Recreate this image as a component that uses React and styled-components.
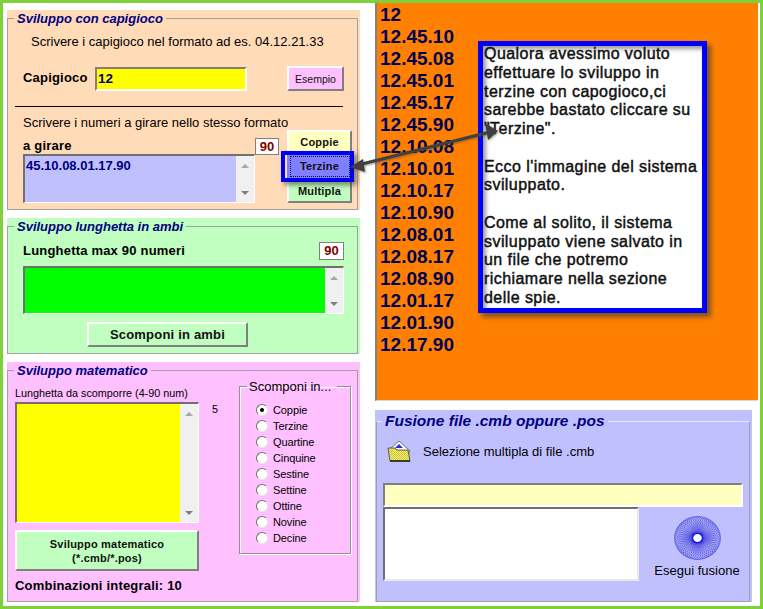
import React from "react";
import styled, { createGlobalStyle } from "styled-components";

const GlobalStyle = createGlobalStyle`
  html, body {
    margin: 0;
    padding: 0;
    background: #fff;
  }
  * { box-sizing: border-box; }
`;

const Page = styled.div`
  position: relative;
  width: 763px;
  height: 609px;
  border: 3px solid #7fd13b;
  background: #fff;
  display: flex;
  font-family: "Liberation Sans", Arial, sans-serif;
  color: #000;
  overflow: hidden;
`;

const LeftColumn = styled.div`
  width: 353px;
  margin: 7px 0 0 4px;
  display: flex;
  flex-direction: column;
  gap: 8px;
`;

const RightColumn = styled.div`
  width: 383px;
  margin-left: 15px;
  display: flex;
  flex-direction: column;
`;

const Panel = styled.div`
  height: ${(p) => p.$height}px;
  width: ${(p) => p.$width || 353}px;
  margin-top: ${(p) => p.$top || 0}px;
  background: ${(p) => p.$bg};
  padding: 1px 2px 0 ${(p) => p.$inset || 0}px;
`;

const Frame = styled.fieldset`
  margin: 0;
  min-width: 0;
  height: 100%;
  padding: 0;
  border: 1px solid #a0a0a0;
  border-top-color: ${(p) => (p.$lightTop ? "#e8e8f8" : "#a0a0a0")};
`;

const Title = styled.legend`
  margin-left: ${(p) => (p.$size ? 5 : 6)}px;
  padding: 0 3px;
  font-size: ${(p) => p.$size || 13}px;
  line-height: ${(p) => (p.$size ? 20 : 15)}px;
  font-weight: bold;
  font-style: italic;
  color: #000080;
`;

const Hint = styled.div`
  font-size: 13px;
  line-height: 16px;
  margin: ${(p) => p.$top || 0}px 0 0 ${(p) => p.$left || 0}px;
  white-space: nowrap;
`;

const BoldLabel = styled.div`
  font-size: 13px;
  line-height: 16px;
  font-weight: bold;
  letter-spacing: 0.2px;
  white-space: nowrap;
`;

const Body = styled.div`
  padding-left: 15px;
`;

const EntryRow = styled.div`
  display: flex;
  align-items: center;
  margin-top: 16px;
  height: 25px;
`;

const EntryLabel = styled(BoldLabel)`
  width: 72px;
  margin-top: -2px;
`;

const YellowEntry = styled.div`
  width: 152px;
  height: 24px;
  margin-right: 40px;
  background: #ffff00;
  border: 2px solid;
  border-color: #808080 #fff #fff #808080;
  padding: 2px 1px;
  font-size: 13.5px;
  line-height: 16px;
  font-weight: bold;
  color: #000080;
`;

const RaisedButton = styled.div`
  position: relative;
  display: flex;
  align-items: center;
  justify-content: center;
  text-align: center;
  width: ${(p) => p.$w}px;
  height: ${(p) => p.$h}px;
  margin: ${(p) => p.$margin || 0};
  background: ${(p) => p.$bg};
  border: 2px solid;
  border-color: #fff #808080 #808080 #fff;
  font-size: ${(p) => p.$size || 11}px;
  line-height: 14px;
  font-weight: ${(p) => (p.$bold ? "bold" : "normal")};
  letter-spacing: ${(p) => (p.$bold ? "0.2px" : "0")};
  color: #101010;
`;

const HighlightButton = styled(RaisedButton)`
  z-index: 2;
  background: #8080ff;
  border: none;
  padding-bottom: 2px;
  &::before {
    content: "";
    position: absolute;
    inset: 2px 2px 2px 3px;
    border: 1px dotted #101030;
  }
  &::after {
    content: "";
    position: absolute;
    inset: -3px -2px -3px -6px;
    border: 4px solid #0000f0;
    box-shadow: 3px 3px 5px rgba(60, 50, 40, 0.6);
  }
`;

const Rule = styled.div`
  width: 328px;
  height: 1px;
  margin: 15px 0 0 -8px;
  background: #000;
`;

const Lower = styled.div`
  display: flex;
  margin-top: 8px;
`;

const LowerText = styled.div`
  width: 264px;
`;

const GirareRow = styled.div`
  width: 256px;
  height: 23px;
  display: flex;
  align-items: flex-end;
  justify-content: space-between;
`;

const Counter = styled.div`
  position: relative;
  z-index: 1;
  width: ${(p) => p.$w}px;
  height: ${(p) => p.$h}px;
  background: #fff;
  border: 1px solid #808080;
  font-size: 13px;
  line-height: ${(p) => p.$h - 2}px;
  font-weight: bold;
  text-align: center;
  color: #800000;
  margin-bottom: ${(p) => p.$drop || 0}px;
`;

const ButtonStack = styled.div`
  margin-top: 15px;
  display: flex;
  flex-direction: column;
`;

const ScrollBox = styled.div`
  display: flex;
  width: ${(p) => p.$w}px;
  height: ${(p) => p.$h}px;
  margin-top: ${(p) => p.$top || 0}px;
  background: ${(p) => p.$bg};
  border: 2px solid;
  border-color: #707070 #fff #fff #707070;
  border-right-width: 1px;
  border-bottom-width: 1px;
`;

const ScrollText = styled.div`
  flex: 1;
  padding: 2px 1px;
  font-size: 13px;
  line-height: 16px;
  font-weight: bold;
  color: #000080;
`;

const Scrollbar = styled.div`
  width: 18px;
  background: #f0f0f0;
  display: flex;
  flex-direction: column;
  justify-content: space-between;
  align-items: center;
  padding: 8px 0 7px;
`;

const ScrollArrow = styled.span`
  width: 0;
  height: 0;
  border-left: 4px solid transparent;
  border-right: 4px solid transparent;
  border-bottom: ${(p) => (p.$down ? "0" : "4px solid #a8a8a8")};
  border-top: ${(p) => (p.$down ? "4px solid #808080" : "0")};
`;

const SpaceRow = styled.div`
  width: 321px;
  margin-top: 8px;
  height: 18px;
  display: flex;
  align-items: center;
  justify-content: space-between;
`;

const MathRow = styled.div`
  display: flex;
  padding-left: 7px;
`;

const MathLeft = styled.div`
  width: 184px;
  margin-top: 8px;
`;

const SmallLabel = styled.div`
  font-size: 10.8px;
  line-height: 14px;
  white-space: nowrap;
`;

const FiveValue = styled(SmallLabel)`
  width: 40px;
  margin-top: 24px;
  padding-left: 13px;
`;

const TotalLabel = styled(BoldLabel)`
  margin-top: 7px;
`;

const GroupFrame = styled.fieldset`
  width: 112px;
  height: 175px;
  margin: 1px 0 0;
  padding: 8px 0 0 16px;
  min-width: 0;
  border: 1px solid #909090;
  box-shadow: 1px 1px 0 #fff, inset 1px 1px 0 #fff;
`;

const GroupTitle = styled.legend`
  margin-left: -9px;
  padding: 0 6px 0 2px;
  font-size: 13px;
  line-height: 15px;
  white-space: nowrap;
`;

const RadioRow = styled.div`
  display: flex;
  align-items: center;
  height: 16px;
  gap: 5px;
  font-size: 11px;
  letter-spacing: -0.1px;
`;

const RadioDot = styled.span`
  position: relative;
  width: 12px;
  height: 12px;
  border-radius: 50%;
  background: #fff;
  border: 1px solid;
  border-color: #707070 #e8e8e8 #e8e8e8 #707070;
  &::after {
    content: "";
    display: ${(p) => (p.$checked ? "block" : "none")};
    position: absolute;
    left: 3px;
    top: 3px;
    width: 4px;
    height: 4px;
    border-radius: 50%;
    background: #000;
  }
`;

const Output = styled.div`
  position: relative;
  height: 398px;
  width: 383px;
  background: #ff8000;
  border-left: 2px solid #808080;
  border-bottom: 1px solid #d8d8d8;
  padding: 1px 0 0 3px;
`;

const SystemLine = styled.div`
  font-size: 19px;
  line-height: 22px;
  font-weight: bold;
  color: #000050;
`;

const Callout = styled.div`
  position: absolute;
  left: 101px;
  top: 38px;
  width: 229px;
  height: 272px;
  background: #fff;
  border: 5px solid #0000ff;
  padding-left: 1px;
  font-size: 16px;
  line-height: 18.77px;
  letter-spacing: 0.44px;
  -webkit-text-stroke: 0.45px #101010;
  color: #101010;
  white-space: nowrap;
  box-shadow: 4px 4px 5px rgba(70, 60, 40, 0.7), inset 3px 3px 4px rgba(0, 0, 0, 0.4);
`;

const CalloutText = styled.p`
  margin: 0 0 18.77px;
  &:first-child {
    margin-top: -1px;
  }
`;

const FusionBody = styled.div`
  padding-left: 6px;
`;

const FileRow = styled.div`
  display: flex;
  align-items: center;
  height: 21px;
  margin: 10px 0 0 4px;
  gap: 12px;
  font-size: 13px;
`;

const PathEntry = styled.div`
  width: 360px;
  height: 24px;
  margin-top: 21px;
  background: #ffffc0;
  border: 2px solid;
  border-color: #808080 #fff #fff #808080;
`;

const FusionRow = styled.div`
  display: flex;
`;

const FileList = styled.div`
  width: 256px;
  height: 74px;
  background: #fff;
  border: 2px solid;
  border-color: #707070 #e8e8e8 #e8e8e8 #707070;
`;

const MergeAction = styled.div`
  width: 104px;
  padding: 9px 0 0 12px;
  display: flex;
  flex-direction: column;
  align-items: center;
  font-size: 13px;
  line-height: 16px;
  white-space: nowrap;
`;

const MergeLabel = styled.div`
  margin-top: 3px;
`;

const ArrowLayer = styled.svg`
  position: absolute;
  left: -3px;
  top: -3px;
  z-index: 5;
  pointer-events: none;
  filter: drop-shadow(1px 1px 1px rgba(60, 60, 60, 0.5));
`;

// hypotrochoid, the loops don't close for 10 turns so the moire looks speckled
const spiralPath = () => {
  const points = [];
  for (let i = 0; i <= 2400; i++) {
    const t = (i / 2400) * Math.PI * 20;
    const x = 14 * Math.cos(t) + 9.5 * Math.cos(4.3 * t);
    const y = 14 * Math.sin(t) - 9.5 * Math.sin(4.3 * t);
    points.push(`${x.toFixed(2)} ${y.toFixed(2)}`);
  }
  return "M" + points.join("L");
};

const Spiral = () => (
  <svg width="47" height="44" viewBox="-24 -24 48 48" preserveAspectRatio="none">
    <path d={spiralPath()} fill="none" stroke="#1c1cd0" strokeWidth="0.4" />
    <circle r="5" fill="#fff" stroke="#1010e0" strokeWidth="1.2" />
  </svg>
);

const FolderIcon = () => (
  <svg width="24" height="21" viewBox="0 0 24 21">
    <defs>
      <pattern id="dither" width="2" height="2" patternUnits="userSpaceOnUse">
        <rect width="2" height="2" fill="#f8f270" />
        <rect width="1" height="1" fill="#c8c040" />
        <rect x="1" y="1" width="1" height="1" fill="#c8c040" />
      </pattern>
    </defs>
    <path d="M3 8 L12 0 L23 10 L21 14 L4 13 Z" fill="#fff" stroke="#505050" strokeWidth="0.8" />
    <path d="M8 7 L12 3 L16 7 Z" fill="#2030e0" />
    <path d="M1 7 L8 7 L10 9 L21 9 L23 20 L3 20 Z" fill="url(#dither)" stroke="#404020" strokeWidth="0.8" />
    <path d="M3 20 L23 20" stroke="#202010" strokeWidth="1.5" />
  </svg>
);

const SYSTEMS = [
  "12", "12.45.10", "12.45.08", "12.45.01", "12.45.17", "12.45.90", "12.10.08",
  "12.10.01", "12.10.17", "12.10.90", "12.08.01", "12.08.17", "12.08.90",
  "12.01.17", "12.01.90", "12.17.90",
];

const SPLITS = ["Coppie", "Terzine", "Quartine", "Cinquine", "Sestine", "Settine", "Ottine", "Novine", "Decine"];

const ScrollArrows = () => (
  <Scrollbar>
    <ScrollArrow />
    <ScrollArrow $down />
  </Scrollbar>
);

export default function App() {
  return (
    <>
      <GlobalStyle />
      <Page>
        <LeftColumn>
          <Panel $height={200} $bg="#ffdbb8">
            <Frame>
              <Title>Sviluppo con capigioco</Title>
              <Body>
                <Hint $top={8} $left={8}>Scrivere i capigioco nel formato ad es. 04.12.21.33</Hint>
                <EntryRow>
                  <EntryLabel>Capigioco</EntryLabel>
                  <YellowEntry>12</YellowEntry>
                  <RaisedButton $w={57} $h={25} $bg="#ffc0ff" $size={10.5}>Esempio</RaisedButton>
                </EntryRow>
                <Rule />
                <Lower>
                  <LowerText>
                    <Hint>Scrivere i numeri a girare nello stesso formato</Hint>
                    <GirareRow>
                      <BoldLabel>a girare</BoldLabel>
                      <Counter $w={24} $h={17} $drop={-1}>90</Counter>
                    </GirareRow>
                    <ScrollBox $w={232} $h={49} $bg="#c0c0ff">
                      <ScrollText>45.10.08.01.17.90</ScrollText>
                      <ScrollArrows />
                    </ScrollBox>
                  </LowerText>
                  <ButtonStack>
                    <RaisedButton $w={65} $h={24} $bg="#ffffc0" $bold>Coppie</RaisedButton>
                    <HighlightButton $w={65} $h={25} $bold>Terzine</HighlightButton>
                    <RaisedButton $w={65} $h={24} $bg="#c0ffc0" $bold>Multipla</RaisedButton>
                  </ButtonStack>
                </Lower>
              </Body>
            </Frame>
          </Panel>

          <Panel $height={136} $bg="#c0ffc0">
            <Frame>
              <Title>Sviluppo lunghetta in ambi</Title>
              <Body>
                <SpaceRow>
                  <BoldLabel>Lunghetta max 90 numeri</BoldLabel>
                  <Counter $w={25} $h={18}>90</Counter>
                </SpaceRow>
                <ScrollBox $w={321} $h={48} $top={6} $bg="#00ff00">
                  <ScrollText />
                  <ScrollArrows />
                </ScrollBox>
                <RaisedButton $w={161} $h={25} $margin="8px 0 0 64px" $bg="#c0ffc0" $size={13} $bold>
                  Scomponi in ambi
                </RaisedButton>
              </Body>
            </Frame>
          </Panel>

          <Panel $height={240} $bg="#ffc0ff">
            <Frame>
              <Title>Sviluppo matematico</Title>
              <MathRow>
                <MathLeft>
                  <SmallLabel>Lunghetta da scomporre (4-90 num)</SmallLabel>
                  <ScrollBox $w={184} $h={121} $top={2} $bg="#ffff00">
                    <ScrollText />
                    <ScrollArrows />
                  </ScrollBox>
                  <RaisedButton $w={184} $h={41} $margin="7px 0 0" $bg="#c0ffc0" $bold>
                    Sviluppo matematico<br />(*.cmb/*.pos)
                  </RaisedButton>
                  <TotalLabel>Combinazioni integrali: 10</TotalLabel>
                </MathLeft>
                <FiveValue>5</FiveValue>
                <GroupFrame>
                  <GroupTitle>Scomponi in...</GroupTitle>
                  {SPLITS.map((name, i) => (
                    <RadioRow key={name}>
                      <RadioDot $checked={i === 0} />
                      {name}
                    </RadioRow>
                  ))}
                </GroupFrame>
              </MathRow>
            </Frame>
          </Panel>
        </LeftColumn>

        <RightColumn>
          <Output>
            {SYSTEMS.map((line) => (
              <SystemLine key={line}>{line}</SystemLine>
            ))}
            <Callout>
              <CalloutText>
                Qualora avessimo voluto<br />
                effettuare lo sviluppo in<br />
                terzine con capogioco,ci<br />
                sarebbe bastato cliccare su<br />
                "Terzine".
              </CalloutText>
              <CalloutText>
                Ecco l'immagine del sistema<br />
                sviluppato.
              </CalloutText>
              <CalloutText>
                Come al solito, il sistema<br />
                sviluppato viene salvato in<br />
                un file che potremo<br />
                richiamare nella sezione<br />
                delle spie.
              </CalloutText>
            </Callout>
          </Output>

          <Panel $height={192} $width={377} $top={9} $bg="#c0c0ff" $inset={1}>
            <Frame $lightTop>
              <Title $size={15.5}>Fusione file .cmb oppure .pos</Title>
              <FusionBody>
                <FileRow>
                  <FolderIcon />
                  Selezione multipla di file .cmb
                </FileRow>
                <PathEntry />
                <FusionRow>
                  <FileList />
                  <MergeAction>
                    <Spiral />
                    <MergeLabel>Esegui fusione</MergeLabel>
                  </MergeAction>
                </FusionRow>
              </FusionBody>
            </Frame>
          </Panel>
        </RightColumn>

        <ArrowLayer width="763" height="609" viewBox="0 0 763 609">
          <path d="M358 165 L490 132" stroke="#404040" strokeWidth="3" />
          <path d="M350 167 L363 159 L365 172 Z" fill="#404040" />
          <path d="M498 131 L485 123 L488 140 Z" fill="#404040" />
        </ArrowLayer>
      </Page>
    </>
  );
}
